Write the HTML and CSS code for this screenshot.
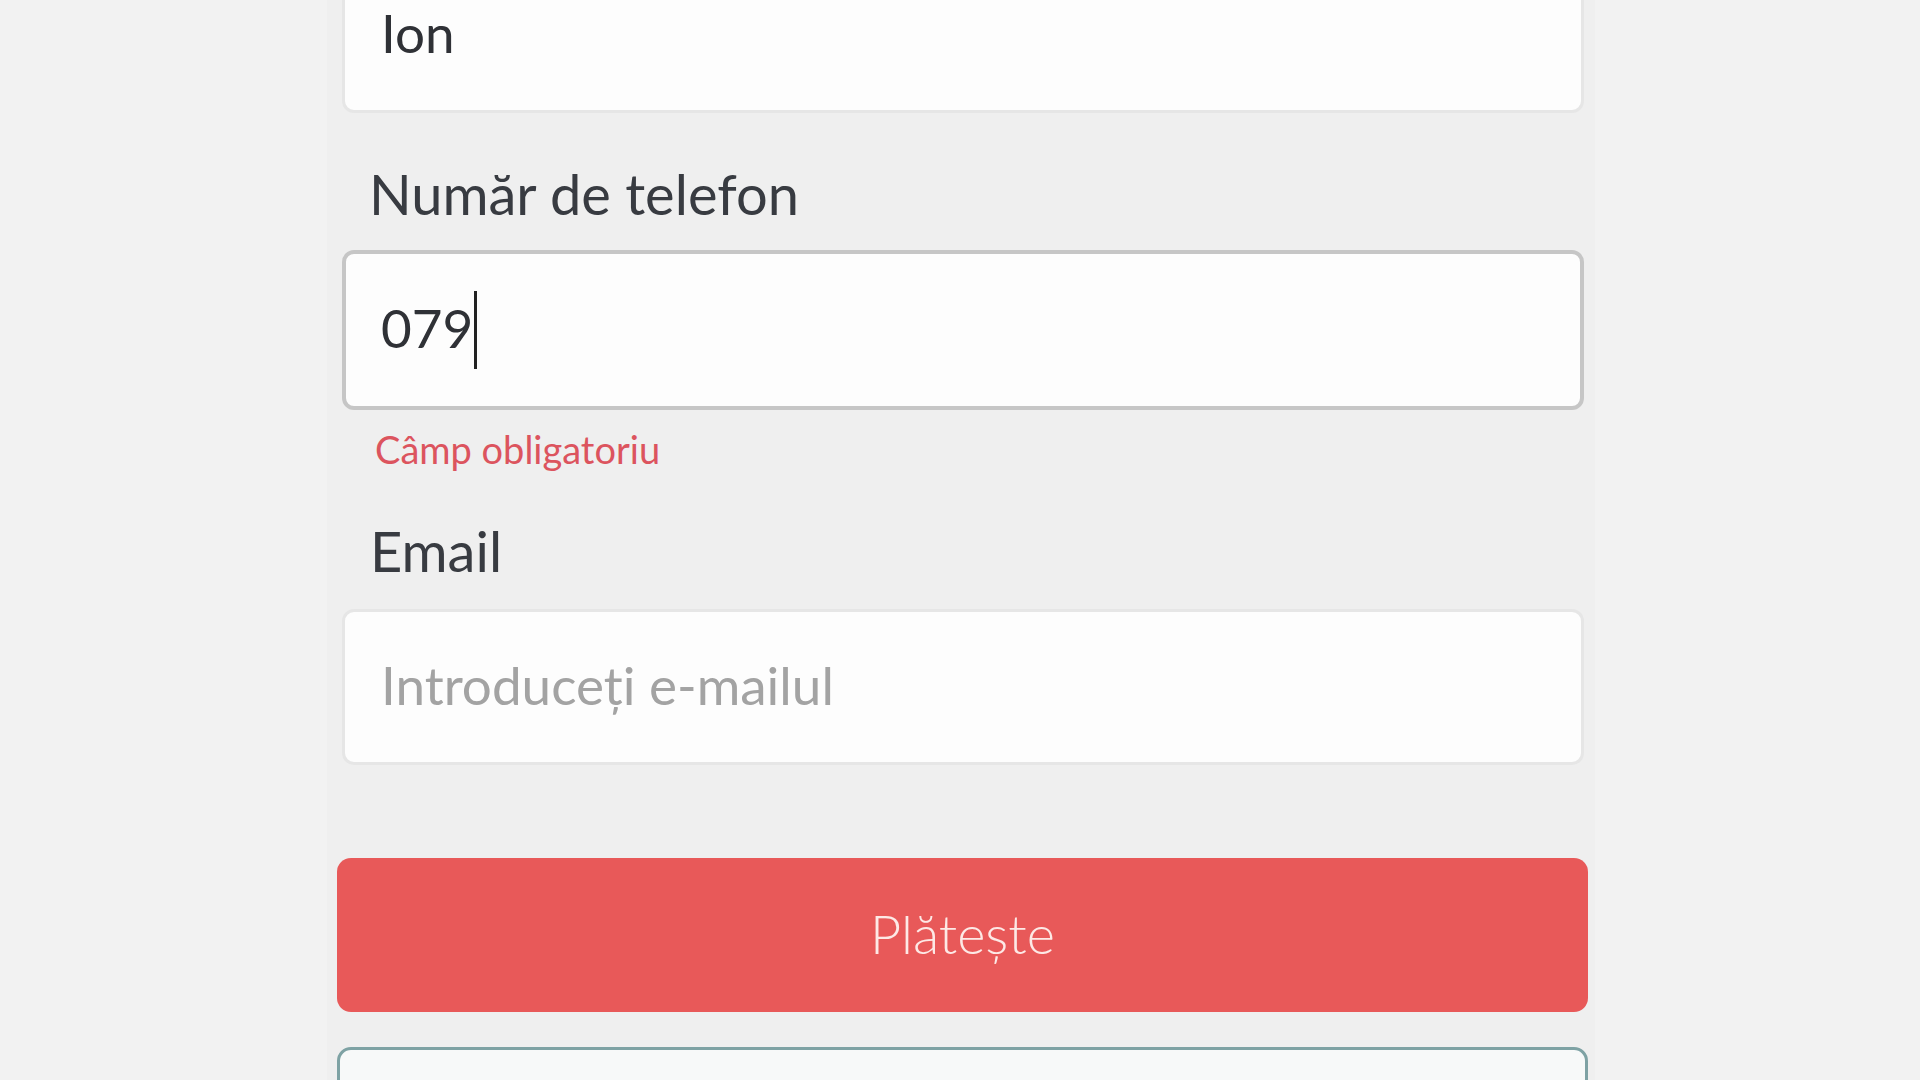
FILE: index.html
```html
<!DOCTYPE html>
<html lang="ro">
<head>
<meta charset="utf-8">
<title>Plată</title>
<link rel="stylesheet" href="styles.css">
</head>
<body>
<main class="page">
  <form class="form">
    <input class="field" type="text" value="Ion">

    <label class="label">Număr de telefon</label>
    <div class="field focused" role="textbox"><span class="value">079</span><span class="caret"></span></div>
    <div class="error">Câmp obligatoriu</div>

    <label class="label email-label">Email</label>
    <input class="field" type="email" placeholder="Introduceți e-mailul">

    <button type="button" class="btn-pay">Plătește</button>
    <button type="button" class="btn-outline"></button>
  </form>
</main>
</body>
</html>
```

FILE: styles.css
```css
html, body {
  margin: 0;
  padding: 0;
  height: 1080px;
  overflow: hidden;
  background: #f2f2f2;
}

body {
  font-family: "Lato", "Open Sans", sans-serif;
  color: #3a3d42;
}

.page {
  display: flex;
  justify-content: flex-start;
  padding-left: 327px;
}

.form {
  width: 1268px;
  box-sizing: border-box;
  padding: 0 7px 0 10px;
  margin-top: -43px;
  background: #efefef;
  display: flex;
  flex-direction: column;
  min-height: 1200px;
}

.form > * {
  flex-shrink: 0;
}

.field {
  box-sizing: border-box;
  display: flex;
  align-items: center;
  height: 156px;
  margin: 0 4px 0 5px;
  padding: 0 36px 6px 36px;
  border: 3px solid #e6e6e6;
  border-radius: 12px;
  background: #fdfdfd;
  font-family: "Lato", "Open Sans", sans-serif;
  font-size: 53px;
  color: #2f3136;
  outline: none;
  width: auto;
}

.field::placeholder {
  color: #a3a3a3;
}

.field.focused {
  height: 160px;
  border: 4px solid #c6c6c6;
  padding-left: 35px;
  margin-top: 23px;
}

.caret {
  display: inline-block;
  width: 3px;
  height: 78px;
  margin-left: 1px;
  background: #222;
  align-self: center;
  transform: translateY(3px);
}

.label {
  display: block;
  font-size: 56px;
  line-height: 66px;
  padding-left: 32px;
  margin-top: 48px;
  color: #383b41;
}

.error {
  font-size: 38px;
  line-height: 43px;
  padding-left: 38px;
  margin-top: 18px;
  color: #dc545e;
}

.email-label {
  margin-top: 47px;
  padding-left: 33px;
}

.email-label + .field {
  margin-top: 25px;
}

.btn-pay {
  box-sizing: border-box;
  margin-top: 93px;
  height: 154px;
  border: none;
  border-radius: 14px;
  background: #e85959;
  color: #fde9e6;
  font-family: "Lato", "Open Sans", sans-serif;
  font-weight: 300;
  font-size: 54px;
  padding-bottom: 4px;
}

.btn-outline {
  box-sizing: border-box;
  margin-top: 35px;
  height: 154px;
  border: 3px solid #7ea2a4;
  border-radius: 14px;
  background: #f7f9f9;
}
```
